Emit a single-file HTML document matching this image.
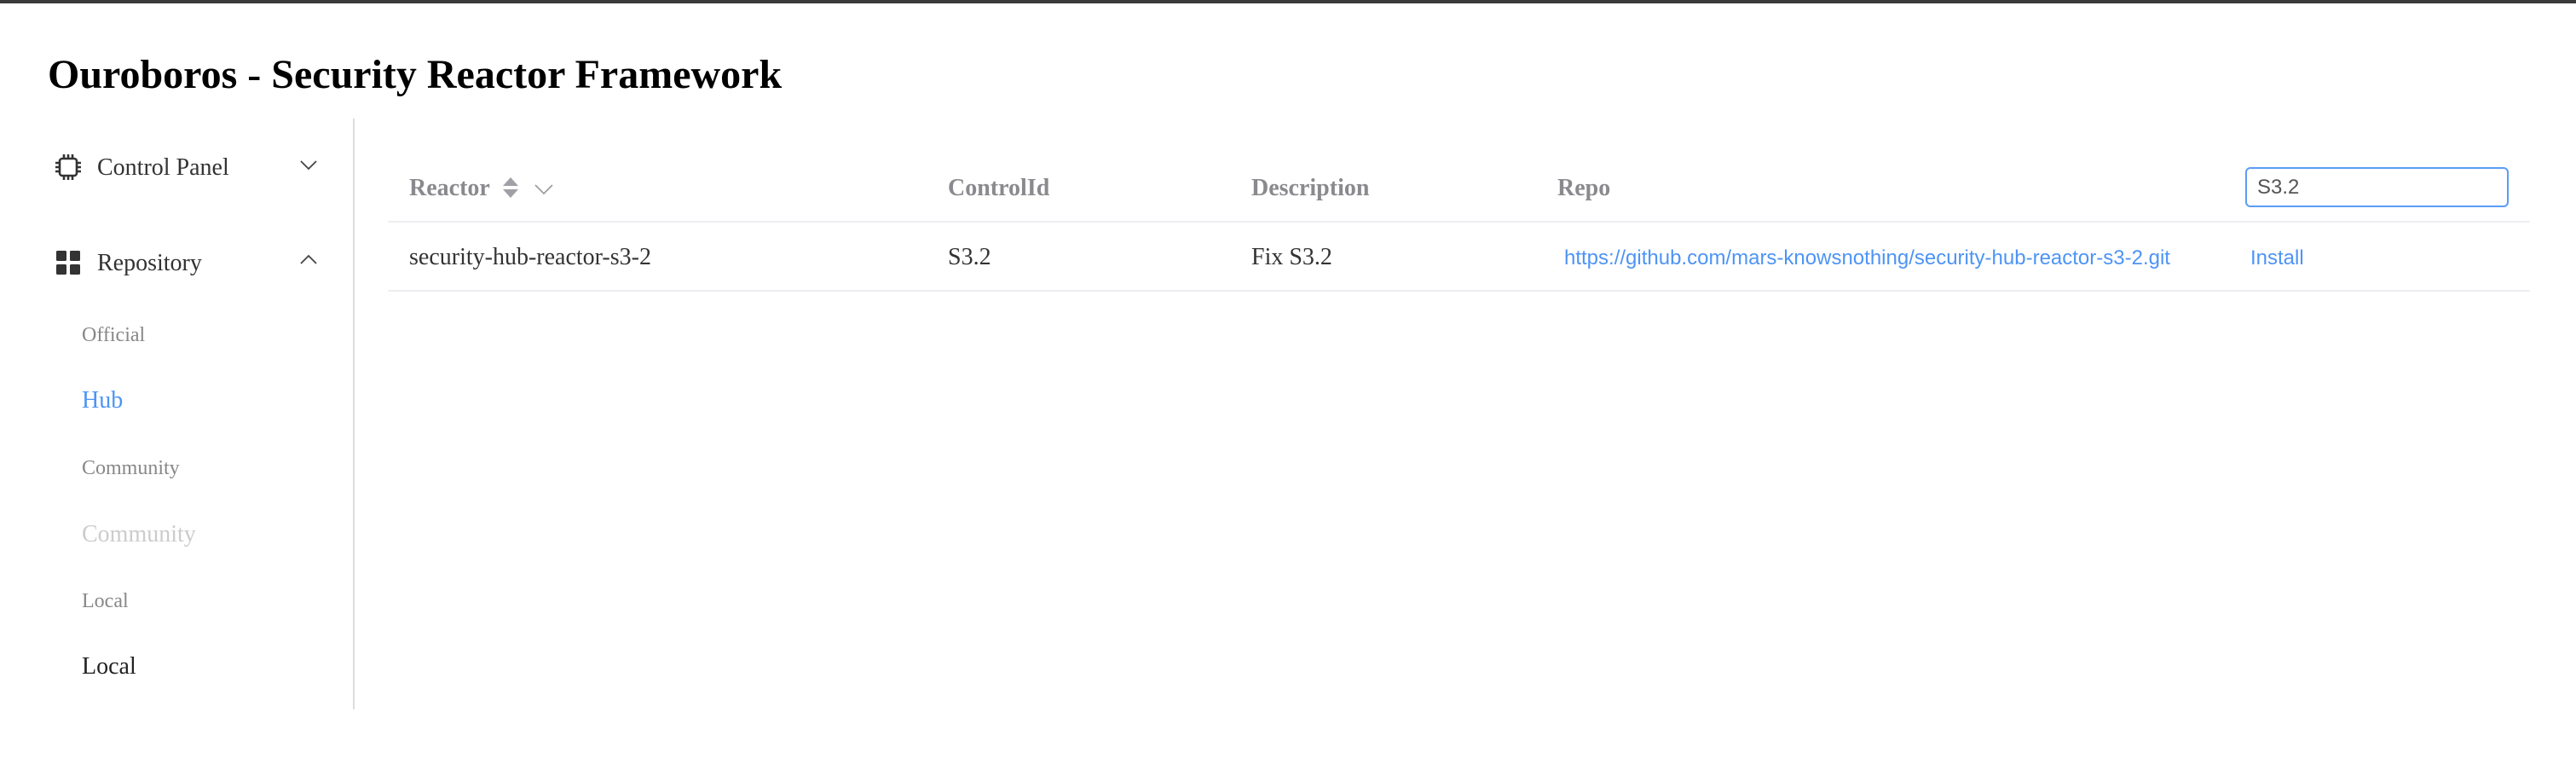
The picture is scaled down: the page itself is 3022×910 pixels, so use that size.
<!DOCTYPE html>
<html><head><meta charset="utf-8"><style>
*{margin:0;padding:0;box-sizing:border-box}
body{width:3022px;height:910px;background:#fff;position:relative;overflow:hidden;font-family:"Liberation Serif",serif}
.a{position:absolute;white-space:nowrap}
.topbar{position:absolute;left:0;top:0;width:3022px;height:4px;background:#3a3a3a}
h1{position:absolute;left:56px;top:60px;font-size:48px;font-weight:bold;color:#000;white-space:nowrap}
.div{position:absolute;left:414px;top:139px;width:2px;height:693px;background:#dcdde3}
.nav{font-size:28px;color:#333}
.sub{font-size:24px;color:#888}
.th{font-size:28px;font-weight:bold;color:#8a8a8e}
.td{font-size:28px;color:#333}
.ln{position:absolute;left:455px;width:2513px;height:2px;background:#eeeef2}
.lk{font-family:"Liberation Sans",sans-serif;color:#4d94f5;font-size:24px}
.inp{position:absolute;left:2634px;top:196px;width:309px;height:47px;border:2px solid #5b9cf5;border-radius:6px;font-family:"Liberation Sans",sans-serif;font-size:24px;color:#555;padding:8px 0 0 12px}
</style></head><body>
<div class="topbar"></div>
<h1>Ouroboros - Security Reactor Framework</h1>
<div class="div"></div>

<svg class="a" style="left:62px;top:178px" width="36" height="36" viewBox="0 0 36 36" fill="none" stroke="#333" stroke-width="2.6">
<rect x="8" y="8" width="20" height="20" rx="3"/>
<path d="M13 3v5M18 3v5M23 3v5M13 28v5M18 28v5M23 28v5M3 13h5M3 18h5M3 23h5M28 13h5M28 18h5M28 23h5"/>
</svg>
<div class="a nav" style="left:114px;top:181px">Control Panel</div>
<svg class="a" style="left:352px;top:188px" width="20" height="12" viewBox="0 0 20 12" fill="none" stroke="#444" stroke-width="1.8"><path d="M1 1l9 9 9-9"/></svg>

<svg class="a" style="left:66px;top:294px" width="28" height="28" viewBox="0 0 28 28" fill="#333">
<rect x="0" y="0" width="12" height="12" rx="1.5"/><rect x="16" y="0" width="12" height="12" rx="1.5"/><rect x="0" y="16" width="12" height="12" rx="1.5"/><rect x="16" y="16" width="12" height="12" rx="1.5"/>
</svg>
<div class="a nav" style="left:114px;top:293px">Repository</div>
<svg class="a" style="left:352px;top:298px" width="20" height="12" viewBox="0 0 20 12" fill="none" stroke="#444" stroke-width="1.8"><path d="M1 11l9-9 9 9"/></svg>

<div class="a sub" style="left:96px;top:380px">Official</div>
<div class="a sub" style="left:96px;top:454px;font-size:28px;color:#4d94f5">Hub</div>
<div class="a sub" style="left:96px;top:536px">Community</div>
<div class="a sub" style="left:96px;top:611px;font-size:28px;color:#ccc">Community</div>
<div class="a sub" style="left:96px;top:692px">Local</div>
<div class="a sub" style="left:96px;top:766px;font-size:28px;color:#222">Local</div>

<div class="a th" style="left:480px;top:205px">Reactor</div>
<svg class="a" style="left:588px;top:207px" width="22" height="26" viewBox="0 0 22 26" fill="#a0a0a6"><path d="M11 1l9 10H2zM11 25l9-10H2z"/></svg>
<svg class="a" style="left:627px;top:216px" width="22" height="13" viewBox="0 0 22 13" fill="none" stroke="#999" stroke-width="1.6"><path d="M1 1l10 10 10-10"/></svg>
<div class="a th" style="left:1112px;top:205px">ControlId</div>
<div class="a th" style="left:1468px;top:205px">Description</div>
<div class="a th" style="left:1827px;top:205px">Repo</div>
<div class="inp">S3.2</div>
<div class="ln" style="top:259px"></div>
<div class="a td" style="left:480px;top:286px">security-hub-reactor-s3-2</div>
<div class="a td" style="left:1112px;top:286px">S3.2</div>
<div class="a td" style="left:1468px;top:286px">Fix S3.2</div>
<div class="a lk" style="left:1835px;top:289px">https://github.com/mars-knowsnothing/security-hub-reactor-s3-2.git</div>
<div class="a lk" style="left:2640px;top:289px">Install</div>
<div class="ln" style="top:340px"></div>
</body></html>
